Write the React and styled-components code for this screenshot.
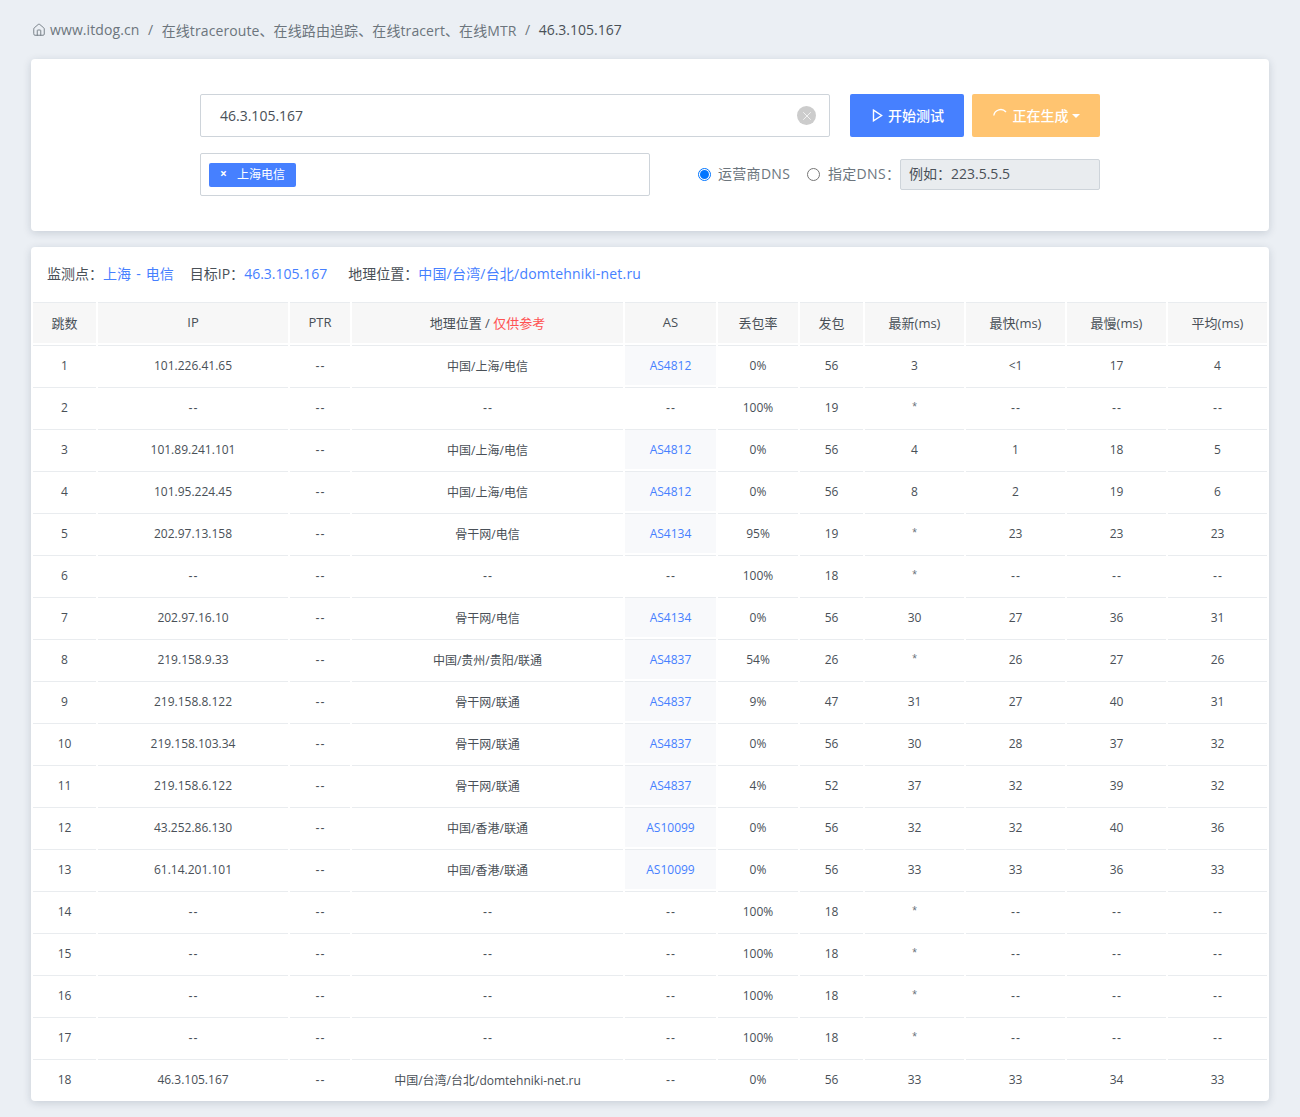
import React from "react";
import styled, { createGlobalStyle } from "styled-components";
import { Home, X } from "lucide-react";

const GlobalStyle = createGlobalStyle`
  html, body {
    margin: 0;
    padding: 0;
    background: #ebeff4;
    font-family: "Open Sans", "Noto Sans CJK SC", sans-serif;
    color: #495057;
  }
  * { box-sizing: border-box; }
`;

const Page = styled.div`
  padding: 0 31px 16px;
  height: 1117px;
  overflow: hidden;
`;

const Breadcrumb = styled.nav`
  height: 59px;
  padding-left: 1px;
  display: flex;
  align-items: center;
  font-size: 14px;
  color: #6c757d;
`;

const Crumb = styled.span`
  display: inline-flex;
  align-items: center;
  gap: 4px;
  letter-spacing: ${props => (props.$active ? 0 : 0.1)}px;
  color: ${props => (props.$active ? "#495057" : "#6c757d")};
`;

const Slash = styled.span`
  padding: 0 8.5px;
  color: #6c757d;
`;

const Card = styled.section`
  background: #fff;
  border-radius: 4px;
  box-shadow: 0 2px 8px rgba(18, 38, 63, 0.16);
`;

const FormCard = styled(Card)`
  height: 172px;
  padding: 35px 169px 0;
  margin-bottom: 16px;
`;

const FormRow = styled.div`
  display: flex;
  align-items: center;
  margin-bottom: ${props => props.$gap || 0}px;
`;

const InputBox = styled.div`
  position: relative;
  flex: none;
  height: 43px;
  width: ${props => props.$width}px;
  border: 1px solid #ced4da;
  border-radius: 2px;
  display: flex;
  align-items: center;
  padding: 0 19px;
  font-size: 14px;
  color: #495057;
`;

const ClearButton = styled.span`
  position: absolute;
  right: 13px;
  top: 11px;
  width: 19px;
  height: 19px;
  border-radius: 50%;
  background: #ccc;
  color: #f4f4f4;
  display: flex;
  align-items: center;
  justify-content: center;
`;

const Button = styled.button`
  height: 43px;
  width: ${props => props.$width}px;
  margin-left: ${props => props.$left}px;
  border: 0;
  border-radius: 2px;
  background: ${props => props.$bg};
  color: #fff;
  font-family: inherit;
  font-size: 14px;
  font-weight: 500;
  display: flex;
  align-items: center;
  justify-content: center;
  gap: 4px;
  padding: 0;
`;

const ButtonLabel = styled.span`
  padding-bottom: 2px;
`;

const PlayIcon = styled.svg`
  width: 11px;
  height: 13px;
  margin-left: 2px;
  margin-right: 1px;
`;

const Spinner = styled.svg`
  width: 16px;
  height: 16px;
`;

const Caret = styled.span`
  width: 0;
  height: 0;
  margin-left: -1px;
  border-top: 4px solid #fff;
  border-left: 4px solid transparent;
  border-right: 4px solid transparent;
`;

const TagBox = styled(InputBox)`
  padding: 0 8px;
`;

const Tag = styled.span`
  height: 24px;
  width: 87px;
  background: #4680ff;
  border-radius: 2px;
  color: #fff;
  font-size: 12px;
  display: flex;
  align-items: center;
  padding: 0 0 2px 11px;
  gap: 10px;
`;

const TagClose = styled.span`
  font-weight: 700;
  font-size: 12px;
`;

const DnsGroup = styled.div`
  flex: none;
  width: 402px;
  display: flex;
  align-items: center;
  margin-left: 48px;
  font-size: 14px;
  color: #6c757d;
  white-space: nowrap;
`;

const RadioDot = styled.span`
  flex: none;
  width: 13px;
  height: 13px;
  border-radius: 50%;
  border: 1px solid ${props => (props.$on ? "#0075ff" : "#767676")};
  display: inline-flex;
  align-items: center;
  justify-content: center;
  margin-right: ${props => (props.$on ? 7 : 8)}px;
  margin-left: ${props => props.$left || 0}px;
  &::after {
    content: "";
    width: 9px;
    height: 9px;
    border-radius: 50%;
    background: ${props => (props.$on ? "#0075ff" : "transparent")};
  }
`;

const DnsInput = styled.span`
  flex: none;
  width: 200px;
  height: 31px;
  margin-left: auto;
  background: #e9ecef;
  border: 1px solid #ced4da;
  border-radius: 2px;
  font-size: 14px;
  color: #495057;
  display: flex;
  align-items: center;
  padding: 0 8px 3px;
`;

const DnsLabel = styled.span`
  width: ${props => props.$width}px;
  flex: none;
  padding-bottom: 3px;
  letter-spacing: 0.3px;
`;

const ResultCard = styled(Card)`
  height: 854px;
  overflow: hidden;
`;

const Summary = styled.div`
  height: 53px;
  padding: 0 16px 2px;
  display: flex;
  align-items: center;
  font-size: 14px;
  color: #495057;
  white-space: nowrap;
`;

const SummaryItem = styled.span`
  margin-right: ${props => props.$right || 16}px;
`;

const Link = styled.span`
  color: #4680ff;
`;

const SiteLink = styled(Link)`
  word-spacing: 1.5px;
  letter-spacing: ${props => props.$spread || 0}px;
`;

const Table = styled.table`
  width: 1238px;
  border-collapse: separate;
  border-spacing: 2px;
  table-layout: fixed;
`;

const HeadCell = styled.th`
  height: 41px;
  padding: 0 0 2px;
  background: #f7f7f7;
  border-top: 1px solid #e9ecef;
  font-size: 13px;
  font-weight: 400;
  color: #495057;
  text-align: center;
  width: ${props => props.$width}px;
`;

const Warn = styled.span`
  color: #ff5252;
`;

const Cell = styled.td`
  height: 40px;
  padding: 0;
  border-top: 1px solid #e9ecef;
  font-size: 12px;
  color: #495057;
  text-align: center;
  background: ${props => (props.$as ? "#f8f9fb" : "transparent")};
`;

const Blank = styled.span`
  font-family: "Liberation Sans", sans-serif;
  letter-spacing: 1px;
  padding-left: 1px;
`;

const Star = styled.span`
  font-family: "Liberation Sans", sans-serif;
  color: #6c757d;
  position: relative;
  top: -1px;
`;

const columns = [
  ["跳数", 63],
  ["IP", 190],
  ["PTR", 60],
  ["GEO", 271],
  ["AS", 91],
  ["丢包率", 80],
  ["发包", 63],
  ["最新(ms)", 99],
  ["最快(ms)", 99],
  ["最慢(ms)", 99],
  ["平均(ms)", 99],
];

const hops = [
  [1, "101.226.41.65", "中国/上海/电信", "AS4812", "0%", 56, "3", "<1", "17", "4"],
  [2, "--", "--", "--", "100%", 19, "*", "--", "--", "--"],
  [3, "101.89.241.101", "中国/上海/电信", "AS4812", "0%", 56, "4", "1", "18", "5"],
  [4, "101.95.224.45", "中国/上海/电信", "AS4812", "0%", 56, "8", "2", "19", "6"],
  [5, "202.97.13.158", "骨干网/电信", "AS4134", "95%", 19, "*", "23", "23", "23"],
  [6, "--", "--", "--", "100%", 18, "*", "--", "--", "--"],
  [7, "202.97.16.10", "骨干网/电信", "AS4134", "0%", 56, "30", "27", "36", "31"],
  [8, "219.158.9.33", "中国/贵州/贵阳/联通", "AS4837", "54%", 26, "*", "26", "27", "26"],
  [9, "219.158.8.122", "骨干网/联通", "AS4837", "9%", 47, "31", "27", "40", "31"],
  [10, "219.158.103.34", "骨干网/联通", "AS4837", "0%", 56, "30", "28", "37", "32"],
  [11, "219.158.6.122", "骨干网/联通", "AS4837", "4%", 52, "37", "32", "39", "32"],
  [12, "43.252.86.130", "中国/香港/联通", "AS10099", "0%", 56, "32", "32", "40", "36"],
  [13, "61.14.201.101", "中国/香港/联通", "AS10099", "0%", 56, "33", "33", "36", "33"],
  [14, "--", "--", "--", "100%", 18, "*", "--", "--", "--"],
  [15, "--", "--", "--", "100%", 18, "*", "--", "--", "--"],
  [16, "--", "--", "--", "100%", 18, "*", "--", "--", "--"],
  [17, "--", "--", "--", "100%", 18, "*", "--", "--", "--"],
  [18, "46.3.105.167", "中国/台湾/台北/domtehniki-net.ru", "--", "0%", 56, "33", "33", "34", "33"],
];

const renderValue = value => {
  if (value === "--") return <Blank>--</Blank>;
  if (value === "*") return <Star>*</Star>;
  return value;
};

const App = () => {
  return (
    <Page>
      <GlobalStyle />
      <Breadcrumb>
        <Crumb><Home size={14} strokeWidth={1.5} />www.itdog.cn</Crumb>
        <Slash>/</Slash>
        <Crumb>在线traceroute、在线路由追踪、在线tracert、在线MTR</Crumb>
        <Slash>/</Slash>
        <Crumb $active>46.3.105.167</Crumb>
      </Breadcrumb>

      <FormCard>
        <FormRow $gap={16}>
          <InputBox $width={630}>
            46.3.105.167
            <ClearButton><X size={14} strokeWidth={1.6} /></ClearButton>
          </InputBox>
          <Button $width={114} $left={20} $bg="#4680ff">
            <PlayIcon viewBox="0 0 11 13">
              <path d="M1.5 1.2 L9.6 6.5 L1.5 11.8 Z" fill="none" stroke="#fff" strokeWidth="1.4" />
            </PlayIcon>
            <ButtonLabel>开始测试</ButtonLabel>
          </Button>
          <Button $width={128} $left={8} $bg="#ffc470">
            <Spinner viewBox="0 0 16 16">
              <path d="M0.8 7.5 A7 7 0 0 1 13 4" fill="none" stroke="#fff" strokeWidth="1.4" />
            </Spinner>
            <ButtonLabel>正在生成</ButtonLabel>
            <Caret />
          </Button>
        </FormRow>
        <FormRow>
          <TagBox $width={450}>
            <Tag><TagClose>×</TagClose>上海电信</Tag>
          </TagBox>
          <DnsGroup>
            <RadioDot $on />
            <DnsLabel $width={73}>运营商DNS</DnsLabel>
            <RadioDot $left={16} />
            <DnsLabel $width={64}>指定DNS：</DnsLabel>
            <DnsInput>例如：223.5.5.5</DnsInput>
          </DnsGroup>
        </FormRow>
      </FormCard>

      <ResultCard>
        <Summary>
          <SummaryItem>监测点：<SiteLink>上海 - 电信</SiteLink></SummaryItem>
          <SummaryItem $right={21}>目标IP：<Link>46.3.105.167</Link></SummaryItem>
          <SummaryItem>地理位置：<SiteLink $spread={0.2}>中国/台湾/台北/domtehniki-net.ru</SiteLink></SummaryItem>
        </Summary>
        <Table>
          <thead>
            <tr>
              {columns.map(([name, width]) => (
                <HeadCell key={name} $width={width}>
                  {name === "GEO" ? <>地理位置 / <Warn>仅供参考</Warn></> : name}
                </HeadCell>
              ))}
            </tr>
          </thead>
          <tbody>
            {hops.map(hop => (
              <tr key={hop[0]}>
                <Cell>{hop[0]}</Cell>
                <Cell>{renderValue(hop[1])}</Cell>
                <Cell>{renderValue("--")}</Cell>
                <Cell>{renderValue(hop[2])}</Cell>
                {hop[3] === "--"
                  ? <Cell>{renderValue("--")}</Cell>
                  : <Cell $as><Link>{hop[3]}</Link></Cell>}
                {hop.slice(4).map((value, i) => <Cell key={i}>{renderValue(value)}</Cell>)}
              </tr>
            ))}
          </tbody>
        </Table>
      </ResultCard>
    </Page>
  );
};

export default App;
